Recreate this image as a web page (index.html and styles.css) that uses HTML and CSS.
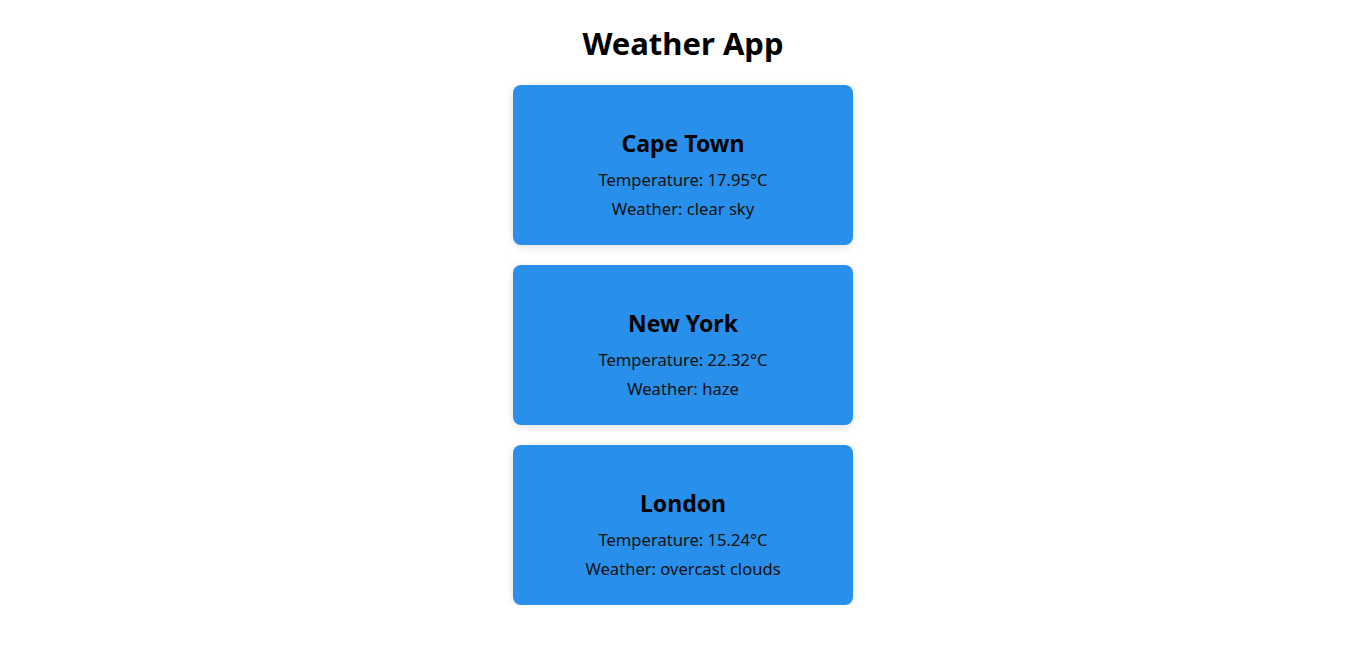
FILE: index.html
```html
<!DOCTYPE html>
<html lang="en">
<head>
<meta charset="utf-8">
<title>Weather App</title>
<link rel="stylesheet" href="styles.css">
</head>
<body>
<main class="app">
  <h1 class="app-title">Weather App</h1>
  <section class="cards">
    <div class="card">
      <h2 class="city">Cape Town</h2>
      <p class="info">Temperature: 17.95°C</p>
      <p class="info">Weather: clear sky</p>
    </div>
    <div class="card">
      <h2 class="city">New York</h2>
      <p class="info">Temperature: 22.32°C</p>
      <p class="info">Weather: haze</p>
    </div>
    <div class="card">
      <h2 class="city">London</h2>
      <p class="info">Temperature: 15.24°C</p>
      <p class="info">Weather: overcast clouds</p>
    </div>
  </section>
</main>
</body>
</html>
```

FILE: styles.css
```css
* { box-sizing: border-box; }
body {
  margin: 0;
  background: #fff;
  color: #000;
  font-family: "Noto Sans", "Open Sans", sans-serif;
}
.app {
  display: flex;
  flex-direction: column;
  align-items: center;
  padding-top: 21px;
}
.app-title {
  margin: 0 0 20px;
  font-size: 31px;
  line-height: 44px;
  font-weight: 700;
}
.cards {
  display: flex;
  flex-direction: column;
  gap: 20px;
}
.card {
  width: 340px;
  height: 160px;
  background: #288fea;
  border-radius: 8px;
  box-shadow: 0 2px 8px rgba(0,0,0,0.12);
  display: flex;
  flex-direction: column;
  align-items: center;
  padding-top: 42px;
  text-align: center;
}
.city {
  margin: 0 0 10px;
  font-size: 23px;
  line-height: 32px;
  font-weight: 700;
}
.info {
  margin: 0 0 8px;
  font-size: 16.6px;
  line-height: 21px;
  color: #111;
}
```
